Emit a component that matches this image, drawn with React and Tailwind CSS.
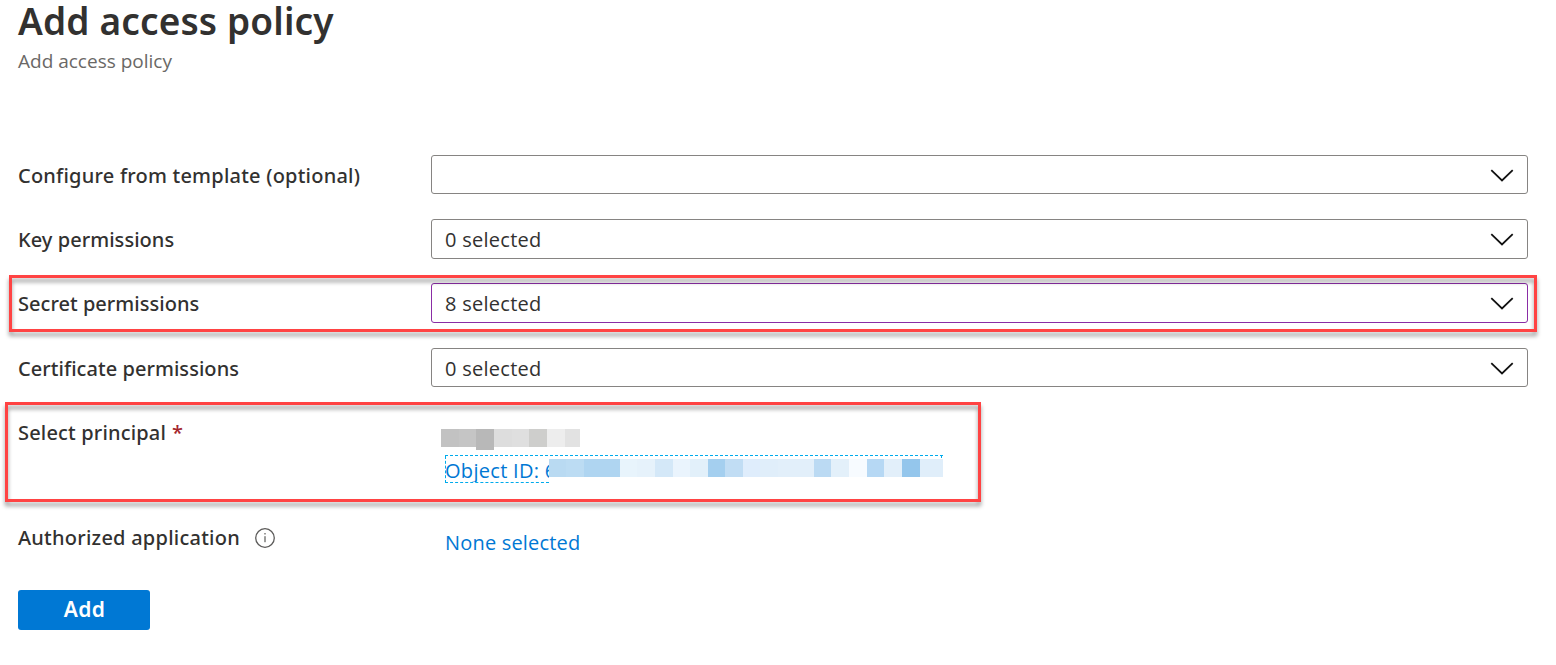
import React from "react";

const nameCells = [
  "w-[18px] h-[18px] bg-[#c2c2c2]",
  "w-[17px] h-[18px] bg-[#c5c5c5]",
  "w-[18px] h-[21px] bg-[#b8b8b8]",
  "w-[18px] h-[18px] bg-[#dddddd]",
  "w-[17px] h-[18px] bg-[#dfdfdf]",
  "w-[18px] h-[18px] bg-[#cececc]",
  "w-[18px] h-[18px] bg-[#ededed]",
  "w-[15px] h-[18px] bg-[#e2e2e2]",
];

const idCells = [
  "w-[17px] bg-[#b9daf2]",
  "w-[18px] bg-[#bcdcf3]",
  "w-[36px] bg-[#afd5f1]",
  "w-[17px] bg-[#e8f4fc]",
  "w-[18px] bg-[#e6f2fb]",
  "w-[18px] bg-[#d4e8f8]",
  "w-[17px] bg-[#eaf4fd]",
  "w-[18px] bg-[#e2f0fa]",
  "w-[17px] bg-[#a4cfef]",
  "w-[18px] bg-[#c1ddf4]",
  "w-[17px] bg-[#dfedfc]",
  "w-[18px] bg-[#e0eefa]",
  "w-[36px] bg-[#e2effa]",
  "w-[17px] bg-[#bbdaf3]",
  "w-[18px] bg-[#e3f0fa]",
  "w-[18px] bg-[#f7fbff]",
  "w-[17px] bg-[#b6d8f4]",
  "w-[18px] bg-[#e2effa]",
  "w-[18px] bg-[#94c6ec]",
  "w-[23px] bg-[#e0eefa]",
];

function Chevron() {
  return (
    <svg className="h-[13px] w-6 shrink-0" viewBox="0 0 24 13" fill="none" stroke="#111" strokeWidth="1.8">
      <path d="M1.3 1.2 12 11.4 22.7 1.2" />
    </svg>
  );
}

function InfoIcon() {
  return (
    <svg className="h-5 w-5 shrink-0" viewBox="0 0 20 20" fill="none">
      <circle cx="10" cy="10" r="9.3" stroke="#5c5b5a" strokeWidth="1.3" />
      <rect x="9.4" y="5" width="1.2" height="1.5" fill="#5c5b5a" />
      <rect x="9.4" y="8.2" width="1.2" height="6" fill="#5c5b5a" />
    </svg>
  );
}

function Highlight({ className }) {
  return (
    <div
      className={`pointer-events-none absolute border-[3px] border-[#ff4343] drop-shadow-[0_4px_2px_rgba(0,0,0,0.4)] ${className}`}
    />
  );
}

function Label({ children, className = "" }) {
  return (
    <div className={`flex h-[42px] w-[413px] shrink-0 items-center text-xl leading-[42px] font-medium ${className}`}>
      {children}
    </div>
  );
}

function Field({ label, tracking, value, row, box, border = "border-[#868482]", highlight }) {
  return (
    <div className={`relative flex ${row}`}>
      <Label className={tracking}>{label}</Label>
      <button
        className={`flex w-[1097px] items-start justify-between rounded-[3px] border bg-white pr-[13px] pl-[13px] text-left font-['Open_Sans','Noto_Sans',sans-serif] text-xl leading-[38px] tracking-[0.27px] ${box} ${border}`}
      >
        <span className="pt-px">{value}</span>
        <span className="flex h-[38px] items-center pt-px">
          <Chevron />
        </span>
      </button>
      {highlight}
    </div>
  );
}

export default function App() {
  return (
    <main className="h-[665px] w-[1556px] bg-white pl-[18px] font-['Noto_Sans','Open_Sans',sans-serif] text-[#323130]">
      <header className="h-[155px]">
        <h1 className="h-[46px] text-[37px] leading-[41px] font-semibold tracking-[0.15px]">Add access policy</h1>
        <p className="font-['Open_Sans','Noto_Sans',sans-serif] text-[19px] leading-[30px] text-[#6a6866]">
          Add access policy
        </p>
      </header>

      <Field
        label="Configure from template (optional)"
        tracking="tracking-[0.22px]"
        value=""
        row="h-16"
        box="h-[39px]"
      />
      <Field label="Key permissions" tracking="tracking-[0.05px]" value="0 selected" row="h-16" box="h-10" />
      <Field
        label="Secret permissions"
        tracking="tracking-[0.03px]"
        value="8 selected"
        row="h-[65px]"
        box="h-10"
        border="border-[#8a2da5]"
        highlight={<Highlight className="-top-2 -left-[9px] h-[57px] w-[1528px]" />}
      />
      <Field
        label="Certificate permissions"
        tracking="tracking-[0.05px]"
        value="0 selected"
        row="h-16"
        box="h-[39px]"
      />

      <section className="relative flex h-[105px]">
        <Label className="tracking-[0.17px]">
          Select principal
          <span className="ml-[6px] text-[#a4262c]">*</span>
        </Label>
        <div className="pt-[17px] pl-[10px]">
          <div className="flex h-[26px] items-start">
            {nameCells.map((cell, i) => (
              <span key={i} className={cell} />
            ))}
          </div>
          <div className="ml-1 flex w-[498px] border-t border-dashed border-[#00abec]">
            <a className="h-[27px] w-[104px] shrink-0 overflow-hidden border-b border-l border-dashed border-[#00abec] font-['Open_Sans','Noto_Sans',sans-serif] text-xl leading-[29px] tracking-[0.3px] whitespace-nowrap text-[#0078d4]">
              <span className="-ml-px">Object ID: 6</span>
            </a>
            <span className="mt-[3px] flex h-[18px] shrink-0">
              {idCells.map((cell, i) => (
                <span key={i} className={cell} />
              ))}
            </span>
            <span className="-ml-[2px] h-[2px] w-px bg-[#00abec]" />
          </div>
        </div>
        <Highlight className="-top-[10px] -left-[13px] h-[100px] w-[976px]" />
      </section>

      <section className="flex h-[73px]">
        <Label className="tracking-[0.24px]">
          Authorized application
          <span className="ml-[15px] flex">
            <InfoIcon />
          </span>
        </Label>
        <a className="mt-[5px] ml-[14px] font-['Open_Sans','Noto_Sans',sans-serif] text-xl leading-[42px] tracking-[0.18px] text-[#0078d4]">
          None selected
        </a>
      </section>

      <button className="flex h-10 w-[132px] justify-center rounded-[3px] bg-[#0078d4] pl-px text-[21px] leading-[38px] font-semibold tracking-[0.4px] text-white">
        Add
      </button>
    </main>
  );
}
